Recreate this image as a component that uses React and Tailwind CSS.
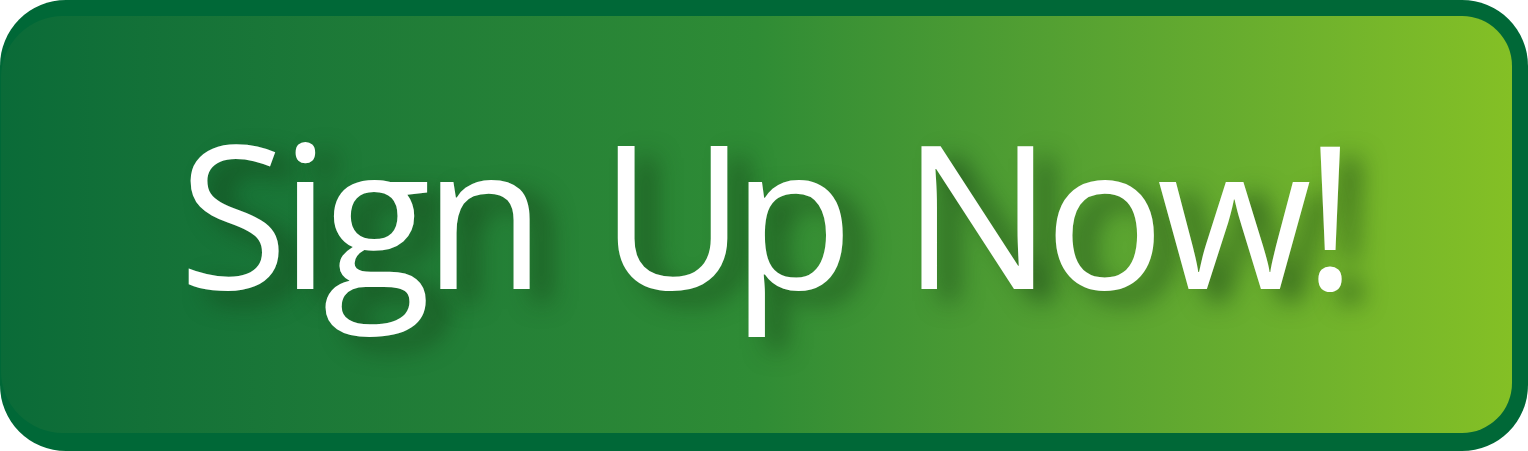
export default function App() {
  return (
    <div className="w-[1528px] h-[451px] bg-white">
      <button className="w-full h-full rounded-[66px] bg-[#006837] pt-[16px] pr-[16px] pb-[18px] pl-[1px] block">
        <div className="w-full h-full rounded-l-[62px] rounded-r-[50px] bg-gradient-to-r from-[#0a6b38] via-[#2f8c35] via-50% to-[#84c025] flex items-center justify-center">
          <span className="font-['Open_Sans',sans-serif] text-[200px] leading-none text-white tracking-[-8px] [word-spacing:18px] pb-[26px] pl-[14px] [text-shadow:20px_12px_24px_rgba(20,60,20,0.6)]">
            Sign <span className="tracking-[-14px]">Up</span> Now!
          </span>
        </div>
      </button>
    </div>
  );
}
